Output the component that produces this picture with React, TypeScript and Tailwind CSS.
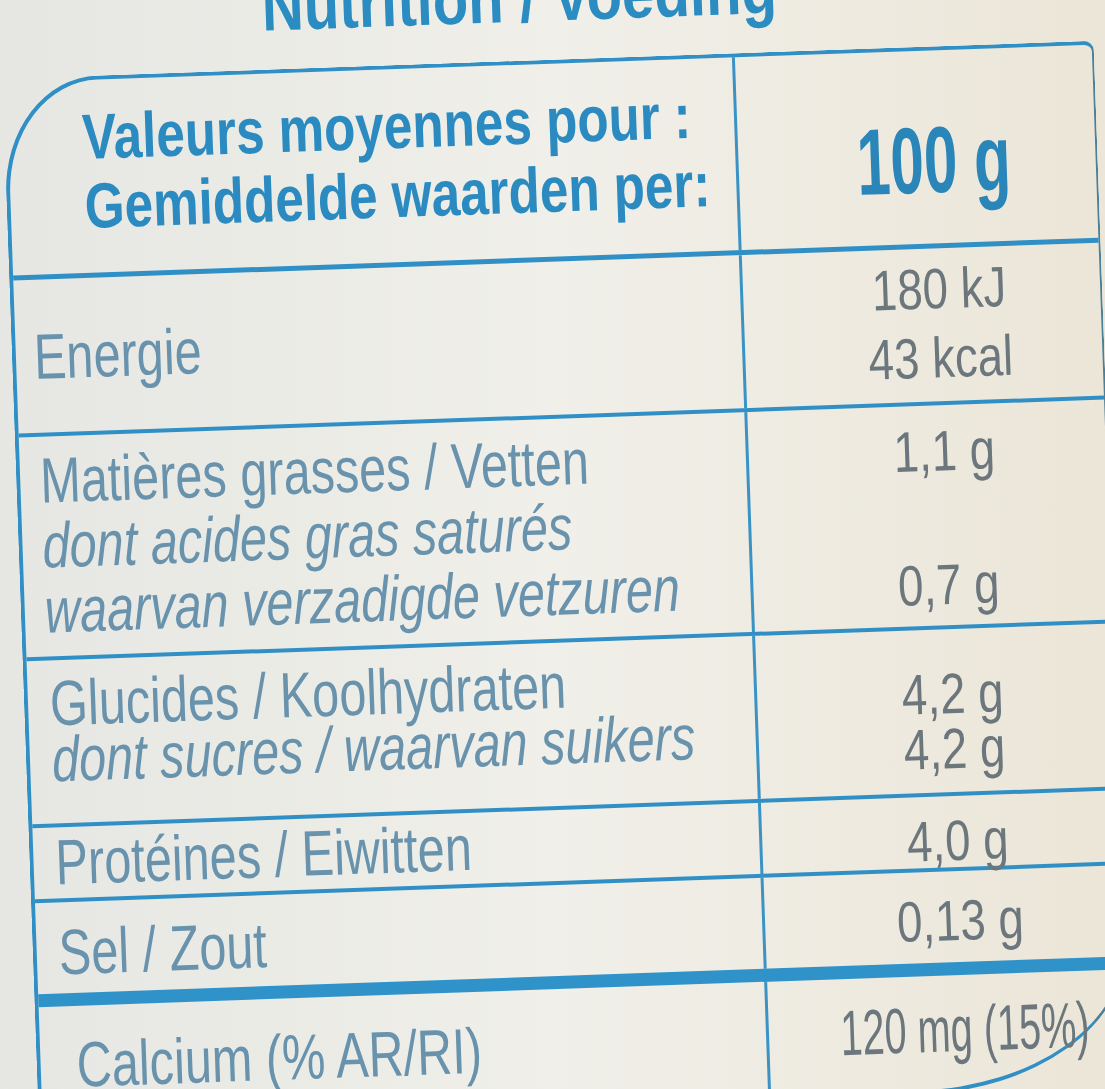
import React from "react";

const font = { fontFamily: '"Liberation Sans", Arial, sans-serif' };

function L({ children, italic = false }: { children: React.ReactNode; italic?: boolean }) {
  return (
    <div className="whitespace-nowrap">
      <span className={"inline-block origin-left scale-x-[0.76] " + (italic ? "italic" : "")}>{children}</span>
    </div>
  );
}

function V({ children }: { children?: React.ReactNode }) {
  return (
    <div className="whitespace-nowrap">
      <span className="inline-block origin-center scale-x-[0.8]">{children ?? "\u00a0"}</span>
    </div>
  );
}

export default function App() {
  return (
    <div
      className="w-[1105px] h-[1089px] overflow-hidden bg-gradient-to-r from-[#e6e7e3] via-[#f0efe9] to-[#ece6d8]"
      style={font}
    >
      <div className="-rotate-2 origin-[550px_560px]">
        <div className="-mt-[38px] pr-[30px] h-[70px] leading-[70px] text-center text-[70px] font-bold text-[#2b8cc2] whitespace-nowrap">
          <span className="inline-block scale-x-[0.83] origin-center">Nutrition / Voeding</span>
        </div>

        <div className="mt-[28px] ml-[18px] w-[1092px] border-l-4 border-t-4 border-b-4 border-r-2 border-l-[#3090c5] border-t-[#3090c5] border-b-[#3090c5] border-r-[#4b8098] rounded-tl-[95px_115px] rounded-tr-[10px] rounded-br-[210px_140px]">
          {/* header */}
          <div className="grid grid-cols-[729px_minmax(0,1fr)] h-[198px] border-b-[5px] border-[#3090c5]">
            <div className="border-r-[3px] border-[#3a93c4] pl-[74px] pt-[23px] text-[64px] leading-[69px] font-bold text-[#2b8bc1]">
              <div className="whitespace-nowrap">
                <span className="inline-block origin-left scale-x-[0.8]">Valeurs moyennes pour :</span>
              </div>
              <div className="whitespace-nowrap">
                <span className="inline-block origin-left scale-x-[0.8]">Gemiddelde waarden per:</span>
              </div>
            </div>
            <div className="pl-[34px] pt-[63px] text-center text-[94px] leading-[94px] font-bold text-[#2a85b9]">
              <span className="inline-block origin-center scale-x-[0.64]">100 g</span>
            </div>
          </div>

          {/* energie */}
          <div className="grid grid-cols-[729px_minmax(0,1fr)] h-[157px] border-b-4 border-[#3090c5]">
            <div className="border-r-[3px] border-[#3a93c4] pl-[18px] flex items-center text-[64px] leading-[64px] text-[#6993ad]">
              <L>Energie</L>
            </div>
            <div className="pl-[34px] pt-[6px] text-center text-[57px] leading-[69px] text-[#6c777d]">
              <V>180 kJ</V>
              <V>43 kcal</V>
            </div>
          </div>

          {/* fat */}
          <div className="grid grid-cols-[729px_minmax(0,1fr)] h-[224px] border-b-4 border-[#3090c5]">
            <div className="border-r-[3px] border-[#3a93c4] pl-[20px] pt-[12px] text-[64px] leading-[65px] text-[#6993ad]">
              <L>Matières grasses / Vetten</L>
              <L italic>dont acides gras saturés</L>
              <L italic>waarvan verzadigde vetzuren</L>
            </div>
            <div className="pl-[34px] pt-[12px] text-center text-[57px] leading-[67px] text-[#6c777d]">
              <V>1,1 g</V>
              <V />
              <V>0,7 g</V>
            </div>
          </div>

          {/* carbs */}
          <div className="grid grid-cols-[729px_minmax(0,1fr)] h-[167px] border-b-4 border-[#3090c5]">
            <div className="border-r-[3px] border-[#3a93c4] pl-[22px] pt-[15px] text-[64px] leading-[56px] text-[#6993ad]">
              <L>Glucides / Koolhydraten</L>
              <L italic>dont sucres / waarvan suikers</L>
            </div>
            <div className="pl-[34px] pt-[37px] text-center text-[57px] leading-[55px] text-[#6c777d]">
              <V>4,2 g</V>
              <V>4,2 g</V>
            </div>
          </div>

          {/* protein */}
          <div className="grid grid-cols-[729px_minmax(0,1fr)] h-[75px] border-b-4 border-[#3090c5]">
            <div className="border-r-[3px] border-[#3a93c4] pl-[22px] pt-[5px] text-[64px] leading-[60px] text-[#6993ad]">
              <L>Protéines / Eiwitten</L>
            </div>
            <div className="pl-[34px] pt-[14px] text-center text-[57px] leading-[60px] text-[#6c777d]">
              <V>4,0 g</V>
            </div>
          </div>

          {/* salt */}
          <div className="grid grid-cols-[729px_minmax(0,1fr)] h-[104px] border-b-[13px] border-[#2f93c9]">
            <div className="border-r-[3px] border-[#3a93c4] pl-[22px] pt-[18px] text-[64px] leading-[64px] text-[#6993ad]">
              <L>Sel / Zout</L>
            </div>
            <div className="pl-[34px] pt-[17px] text-center text-[57px] leading-[64px] text-[#6c777d]">
              <V>0,13 g</V>
            </div>
          </div>

          {/* calcium */}
          <div className="grid grid-cols-[729px_minmax(0,1fr)] h-[114px]">
            <div className="border-r-[3px] border-[#3a93c4] pl-[36px] pt-[27px] text-[64px] leading-[64px] text-[#6993ad]">
              <L>Calcium (% AR/RI)</L>
            </div>
            <div className="pl-[34px] pt-[22px] flex justify-center text-[64px] leading-[64px] text-[#6c777d] whitespace-nowrap">
              <span className="inline-block shrink-0 origin-center scale-x-[0.62]">120 mg (15%)</span>
            </div>
          </div>
        </div>
      </div>
    </div>
  );
}
